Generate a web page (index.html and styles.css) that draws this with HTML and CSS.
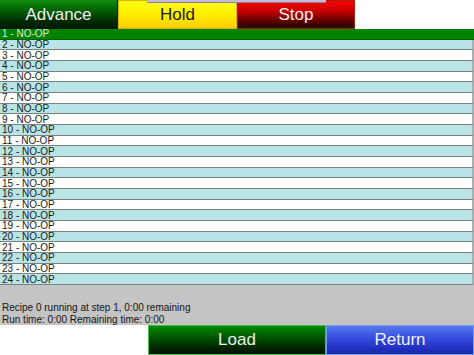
FILE: index.html
```html
<!DOCTYPE html>
<html>
<head>
<meta charset="utf-8">
<link rel="stylesheet" href="styles.css">
</head>
<body>
<div class="screen">
  <div class="top">
    <div class="btn advance">Advance</div>
    <div class="btn hold">Hold</div>
    <div class="btn stop">Stop</div>
    <div class="spacer"></div>
    <div class="tab"></div>
  </div>
  <div class="list">
    <div class="row sel">1 - NO-OP</div>
    <div class="row alt">2 - NO-OP</div>
    <div class="row">3 - NO-OP</div>
    <div class="row alt">4 - NO-OP</div>
    <div class="row">5 - NO-OP</div>
    <div class="row alt">6 - NO-OP</div>
    <div class="row">7 - NO-OP</div>
    <div class="row alt">8 - NO-OP</div>
    <div class="row">9 - NO-OP</div>
    <div class="row alt">10 - NO-OP</div>
    <div class="row">11 - NO-OP</div>
    <div class="row alt">12 - NO-OP</div>
    <div class="row">13 - NO-OP</div>
    <div class="row alt">14 - NO-OP</div>
    <div class="row">15 - NO-OP</div>
    <div class="row alt">16 - NO-OP</div>
    <div class="row">17 - NO-OP</div>
    <div class="row alt">18 - NO-OP</div>
    <div class="row">19 - NO-OP</div>
    <div class="row alt">20 - NO-OP</div>
    <div class="row">21 - NO-OP</div>
    <div class="row alt">22 - NO-OP</div>
    <div class="row">23 - NO-OP</div>
    <div class="row alt">24 - NO-OP</div>
  </div>
  <div class="status">
    <div class="line">Recipe 0 running at step 1, 0:00 remaining</div>
    <div class="line">Run time: 0:00 Remaining time: 0:00</div>
  </div>
  <div class="bottom">
    <div class="blank"></div>
    <div class="btn load">Load</div>
    <div class="btn ret">Return</div>
  </div>
</div>
</body>
</html>
```
FILE: styles.css
```css
html, body {
  margin: 0;
  padding: 0;
  background: #ffffff;
}
.screen {
  width: 474px;
  height: 355px;
  display: flex;
  flex-direction: column;
  font-family: "Liberation Sans", Arial, sans-serif;
  overflow: hidden;
}
.top {
  position: relative;
  display: flex;
  height: 29px;
  flex: 0 0 29px;
}
.btn {
  box-sizing: border-box;
  display: flex;
  align-items: center;
  justify-content: center;
  font-size: 17px;
  color: #f0f0f0;
}
.advance {
  width: 118px;
  background: linear-gradient(#109010 0%, #006000 35%, #002800 75%, #001800 100%);
  border-right: 1px solid #003000;
}
.hold {
  width: 119px;
  color: #202000;
  background: linear-gradient(#ffff10 0%, #ffee00 50%, #ffcc00 100%);
  border: 1px solid #e0b000;
}
.stop {
  width: 118px;
  background: linear-gradient(#ff0000 0%, #c00000 40%, #500000 80%, #200000 100%);
  border: 1px solid #a02010;
}
.spacer {
  flex: 1;
  background: #ffffff;
}
.tab {
  position: absolute;
  left: 147px;
  top: 0;
  width: 179px;
  height: 2px;
  background: #c4bcd8;
  border-bottom: 1px solid #8a8098;
}
.list {
  height: 256px;
  flex: 0 0 256px;
  display: grid;
  grid-template-rows: repeat(24, 1fr);
}
.row {
  box-sizing: border-box;
  font-size: 10px;
  line-height: 9px;
  padding-left: 2px;
  color: #1a1a1a;
  background: #ffffff;
  border-bottom: 1px solid #7a8080;
  border-right: 2px solid #a8b0b0;
  display: flex;
  align-items: center;
  overflow: hidden;
}
.row.alt {
  background: #b8e4e6;
}
.row.sel {
  background: #008400;
  color: #d8f0d8;
  border-bottom: 1px solid #006000;
  border-right: none;
}
.status {
  flex: 0 0 40px;
  background: #c4c4c4;
  box-sizing: border-box;
  padding: 17px 0 0 2px;
  font-size: 10px;
  line-height: 11.5px;
  color: #141414;
  overflow: visible;
  position: relative;
  z-index: 1;
}
.bottom {
  flex: 1;
  display: flex;
}
.blank {
  width: 148px;
  background: #ffffff;
}
.load {
  width: 178px;
  background: linear-gradient(#008a00 0%, #005800 40%, #002200 80%, #001200 100%);
  border: 1px solid #40c040;
  color: #e8f0e8;
}
.ret {
  flex: 1;
  background: linear-gradient(#5878f0 0%, #3850e0 40%, #2030c0 80%, #1828a8 100%);
  border: 1px solid #70a0f0;
  color: #f0f0f8;
}
```
